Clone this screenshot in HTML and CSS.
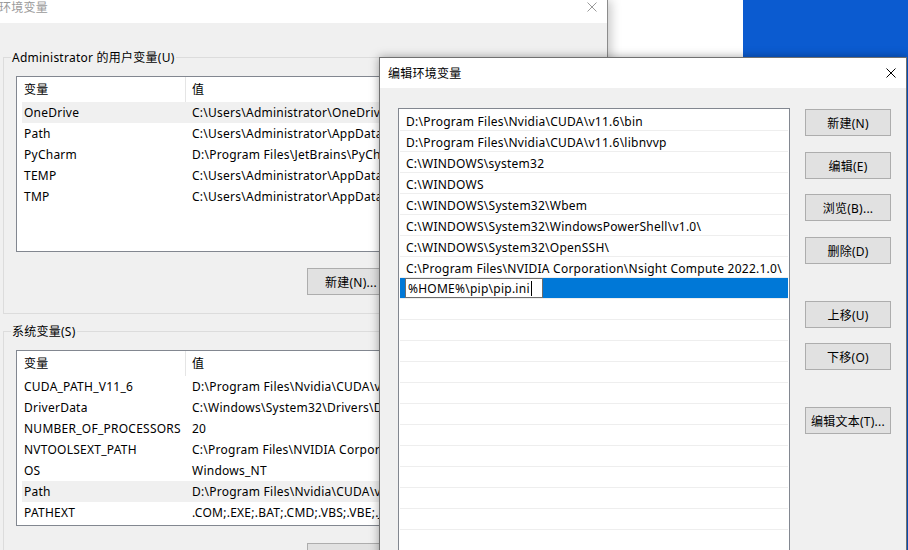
FILE: index.html
```html
<!DOCTYPE html>
<html lang="zh-CN">
<head>
<meta charset="utf-8">
<title>编辑环境变量</title>
<link rel="stylesheet" href="styles.css">
</head>
<body>
<div class="other-window"></div>

<div class="env-dialog">
  <div class="titlebar inactive">
    <span class="title">环境变量</span>
    <svg class="close" width="10" height="10" viewBox="0 0 10 10"><path d="M0.5 0.5L9.5 9.5M9.5 0.5L0.5 9.5" stroke="#9a9a9a" stroke-width="1" fill="none"/></svg>
  </div>
  <div class="env-body">
    <div class="group first">
      <span class="legend">Administrator 的用户变量(U)</span>
      <div class="listview">
        <div class="lv-head"><span class="c1">变量</span><span class="c2">值</span></div>
        <div class="lv-row sel"><span class="c1">OneDrive</span><span class="c2">C:\Users\Administrator\OneDrive</span></div>
        <div class="lv-row"><span class="c1">Path</span><span class="c2">C:\Users\Administrator\AppData\Local\Microsoft\WindowsApps;</span></div>
        <div class="lv-row"><span class="c1">PyCharm</span><span class="c2">D:\Program Files\JetBrains\PyCharm\bin;</span></div>
        <div class="lv-row"><span class="c1">TEMP</span><span class="c2">C:\Users\Administrator\AppData\Local\Temp</span></div>
        <div class="lv-row"><span class="c1">TMP</span><span class="c2">C:\Users\Administrator\AppData\Local\Temp</span></div>
      </div>
      <div class="btnrow">
        <button class="btn wide">新建(N)...</button>
        <button class="btn wide">编辑(E)...</button>
        <button class="btn wide">删除(D)</button>
      </div>
    </div>

    <div class="group second">
      <span class="legend">系统变量(S)</span>
      <div class="listview">
        <div class="lv-head"><span class="c1">变量</span><span class="c2">值</span></div>
        <div class="lv-row"><span class="c1">CUDA_PATH_V11_6</span><span class="c2">D:\Program Files\Nvidia\CUDA\v11.6</span></div>
        <div class="lv-row"><span class="c1">DriverData</span><span class="c2">C:\Windows\System32\Drivers\DriverData</span></div>
        <div class="lv-row"><span class="c1">NUMBER_OF_PROCESSORS</span><span class="c2">20</span></div>
        <div class="lv-row"><span class="c1">NVTOOLSEXT_PATH</span><span class="c2">C:\Program Files\NVIDIA Corporation\NvToolsExt\</span></div>
        <div class="lv-row"><span class="c1">OS</span><span class="c2">Windows_NT</span></div>
        <div class="lv-row sel"><span class="c1">Path</span><span class="c2">D:\Program Files\Nvidia\CUDA\v11.6\bin;</span></div>
        <div class="lv-row"><span class="c1">PATHEXT</span><span class="c2">.COM;.EXE;.BAT;.CMD;.VBS;.VBE;.JS;.JSE;.WSF;.WSH;.MSC</span></div>
      </div>
      <div class="btnrow">
        <button class="btn wide">新建(W)...</button>
        <button class="btn wide">编辑(I)...</button>
        <button class="btn wide">删除(L)</button>
      </div>
    </div>
  </div>
</div>

<div class="edit-dialog">
  <div class="titlebar">
    <span class="title">编辑环境变量</span>
    <svg class="close" width="10" height="10" viewBox="0 0 10 10"><path d="M0.5 0.5L9.5 9.5M9.5 0.5L0.5 9.5" stroke="#000" stroke-width="1" fill="none"/></svg>
  </div>
  <div class="edit-body">
    <div class="pathlist">
      <div class="prow">D:\Program Files\Nvidia\CUDA\v11.6\bin</div>
      <div class="prow">D:\Program Files\Nvidia\CUDA\v11.6\libnvvp</div>
      <div class="prow">C:\WINDOWS\system32</div>
      <div class="prow">C:\WINDOWS</div>
      <div class="prow">C:\WINDOWS\System32\Wbem</div>
      <div class="prow">C:\WINDOWS\System32\WindowsPowerShell\v1.0\</div>
      <div class="prow">C:\WINDOWS\System32\OpenSSH\</div>
      <div class="prow">C:\Program Files\NVIDIA Corporation\Nsight Compute 2022.1.0\</div>
      <div class="prow active"><div class="editbox">%HOME%\pip\pip.ini<span class="caret"></span></div></div>
      <div class="prow"></div>
      <div class="prow"></div>
      <div class="prow"></div>
      <div class="prow"></div>
      <div class="prow"></div>
      <div class="prow"></div>
      <div class="prow"></div>
      <div class="prow"></div>
      <div class="prow"></div>
      <div class="prow"></div>
      <div class="prow"></div>
      <div class="prow"></div>
      <div class="prow"></div>
    </div>
    <div class="btncol">
      <button class="btn">新建(N)</button>
      <button class="btn">编辑(E)</button>
      <button class="btn">浏览(B)...</button>
      <button class="btn">删除(D)</button>
      <button class="btn">上移(U)</button>
      <button class="btn">下移(O)</button>
      <button class="btn">编辑文本(T)...</button>
    </div>
  </div>
</div>
</body>
</html>
```

FILE: styles.css
```css
* { box-sizing: border-box; }
html, body { margin: 0; padding: 0; }
body {
  width: 908px;
  height: 550px;
  overflow: hidden;
  position: relative;
  background: #0b5bd0;
  font-family: "Noto Sans", "Noto Sans CJK SC", sans-serif;
  font-size: 12px;
  letter-spacing: 0.25px;
  color: #000;
}

/* white window behind, on the desktop */
.other-window {
  position: absolute;
  left: 0;
  top: 0;
  width: 743px;
  height: 550px;
  background: #fff;
}

/* ---------- 环境变量 (inactive) ---------- */
.env-dialog {
  position: absolute;
  left: 0;
  top: 0;
  width: 608px;
  height: 570px;
  background: #f0f0f0;
  border-right: 1px solid #8c8c8c;
  box-shadow: 3px 0 10px rgba(0, 0, 0, 0.22);
}
.env-dialog .titlebar {
  height: 23px;
  background: #fff;
  display: flex;
  justify-content: space-between;
  align-items: flex-start;
  padding-right: 10px;
}
.env-dialog .title {
  line-height: 15px;
  color: #9a9a9a;
  margin-left: -1px;
}
.env-dialog .close { margin-top: 2px; }

.env-body { padding: 0 4px 0 3px; }

.group {
  position: relative;
  border: 1px solid #dcdcdc;
  padding: 18px 12px 18px 12px;
}
.group.first { margin-top: 34px; }
.group.second { margin-top: 17px; }
.legend {
  position: absolute;
  left: 7px;
  top: -9px;
  line-height: 17px;
  padding: 0 1px;
  background: #f0f0f0;
  white-space: nowrap;
}

.listview {
  height: 176px;
  background: #fff;
  border: 1px solid #828790;
  overflow: hidden;
}
.lv-head, .lv-row {
  display: flex;
  margin-left: 5px;
  white-space: nowrap;
}
.lv-head { height: 25px; line-height: 25px; }
.lv-row { height: 21px; line-height: 21px; }
.lv-row.sel { background: #f0f0f0; }
.c1 { flex: 0 0 164px; padding-left: 2px; overflow: hidden; }
.lv-head .c1 { border-right: 1px solid #e5e5e5; }
.c2 { padding-left: 6px; }

.btnrow {
  display: flex;
  gap: 8px;
  margin-top: 16px;
  padding-left: 291px;
}
.group.second .btnrow { margin-top: 17px; }

.btn {
  height: 27px;
  width: 86px;
  padding: 0;
  background: #e1e1e1;
  border: 1px solid #adadad;
  font: inherit;
  letter-spacing: inherit;
  color: #000;
  white-space: nowrap;
}
.btn.wide { width: 88px; }

/* ---------- 编辑环境变量 (active) ---------- */
.edit-dialog {
  position: absolute;
  left: 379px;
  top: 57px;
  width: 528px;
  height: 520px;
  background: #f0f0f0;
  border: 1px solid #707070;
  box-shadow: 0 0 9px rgba(0, 0, 0, 0.35);
}
.edit-dialog .titlebar {
  height: 30px;
  background: #fff;
  display: flex;
  justify-content: space-between;
  align-items: center;
  padding: 0 10px 0 8px;
}
.edit-body {
  display: flex;
  align-items: flex-start;
  padding: 20px 0 0 18px;
}
.pathlist {
  width: 392px;
  height: 480px;
  background: #fff;
  border: 1px solid #828790;
  padding: 1px 1px 0 1px;
  overflow: hidden;
}
.prow {
  height: 21px;
  line-height: 17px;
  padding-top: 3px;
  border-bottom: 1px solid #eeeeee;
  padding-left: 6px;
  white-space: nowrap;
}
.prow.active {
  background: #0078d7;
  padding-left: 5px;
  padding-top: 0;
}
.editbox {
  width: 138px;
  height: 20px;
  line-height: 17px;
  padding-top: 1px;
  background: #fff;
  border: 1px solid #6e6e6e;
  padding-left: 2px;
}
.caret {
  display: inline-block;
  width: 1px;
  height: 15px;
  background: #000;
  vertical-align: -3px;
  margin-left: 1px;
}

.btncol {
  display: flex;
  flex-direction: column;
  margin-left: 15px;
  padding-top: 1px;
}
.btncol .btn:nth-child(2) { margin-top: 16px; }
.btncol .btn:nth-child(3) { margin-top: 15px; }
.btncol .btn:nth-child(4) { margin-top: 16px; }
.btncol .btn:nth-child(5) { margin-top: 37px; }
.btncol .btn:nth-child(6) { margin-top: 15px; }
.btncol .btn:nth-child(7) { margin-top: 37px; }
```
